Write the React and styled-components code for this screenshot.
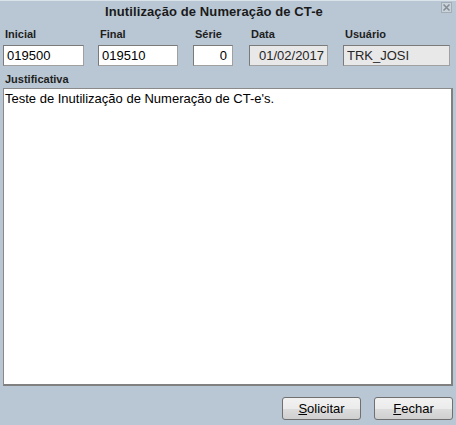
import React from 'react'
import styled, { createGlobalStyle } from 'styled-components'

const Global = createGlobalStyle`
    html, body {
        margin: 0;
        padding: 0;
        background: #b9c7d4;
    }
    body {
        font-family: "Liberation Sans", Arial, sans-serif;
    }
`

function App() {
    return (
        <Window>
            <Global />
            <TitleBar>
                <Title>Inutilização de Numeração de CT-e</Title>
                <CloseBtn aria-label="close">
                    <svg width="11" height="11" viewBox="0 0 11 11">
                        <rect x="0.5" y="0.5" width="10" height="10" fill="#c9d3dc" stroke="#a3acb4" />
                        <path d="M2.5 2.5 L8.5 8.5 M8.5 2.5 L2.5 8.5" stroke="#858c93" strokeWidth="1.6" />
                    </svg>
                </CloseBtn>
            </TitleBar>

            <FieldsRow>
                <Field width={81} offset={3}>
                    <Label>Inicial</Label>
                    <Input defaultValue="019500" />
                </Field>
                <Field width={80} offset={14}>
                    <Label>Final</Label>
                    <Input defaultValue="019510" />
                </Field>
                <Field width={40} offset={15}>
                    <Label>Série</Label>
                    <Input defaultValue="0" align="right" />
                </Field>
                <Field width={79} offset={16}>
                    <Label>Data</Label>
                    <Input defaultValue="01/02/2017" disabled indent={9} />
                </Field>
                <Field width={107} offset={15}>
                    <Label>Usuário</Label>
                    <Input defaultValue="TRK_JOSI" disabled />
                </Field>
            </FieldsRow>

            <JustLabel>Justificativa</JustLabel>
            <TextArea defaultValue="Teste de Inutilização de Numeração de CT-e's." />

            <ButtonRow>
                <Button><u>S</u>olicitar</Button>
                <Button><u>F</u>echar</Button>
            </ButtonRow>
        </Window>
    )
}

export default App

const Window = styled.div`
    width: 456px;
    height: 425px;
    box-sizing: border-box;
    background: #b9c7d4;
    border-top: 1px solid #dbe3ea;
    display: flex;
    flex-direction: column;
    overflow: hidden;
`

const TitleBar = styled.div`
    position: relative;
    height: 21px;
    display: flex;
    align-items: center;
    justify-content: center;
`

const Title = styled.h1`
    margin: 0 0 0 -28px;
    font-size: 13px;
    font-weight: bold;
    color: #1a1a1a;
    letter-spacing: 0.1px;
`

const CloseBtn = styled.div`
    position: absolute;
    right: 4px;
    top: 1px;
    line-height: 0;
`

const FieldsRow = styled.div`
    display: flex;
    margin-top: 5px;
`

const Field = styled.div`
    display: flex;
    flex-direction: column;
    flex: none;
    width: ${p => p.width}px;
    margin-left: ${p => p.offset}px;
`

const Label = styled.label`
    font-size: 11px;
    font-weight: bold;
    color: #1e1e1e;
    padding-left: 2px;
    height: 18px;
    line-height: 15px;
`

const Input = styled.input`
    box-sizing: border-box;
    width: 100%;
    height: 21px;
    border: 1px solid #7a7a7a;
    border-right-color: #a0a0a0;
    border-bottom-color: #a0a0a0;
    background: ${p => (p.disabled ? '#e8e8e8' : '#ffffff')};
    font-family: "Liberation Sans", Arial, sans-serif;
    font-size: 13px;
    color: ${p => (p.disabled ? '#262626' : '#000')};
    text-align: ${p => p.align || 'left'};
    padding: 0 ${p => (p.align === 'right' ? 5 : 2)}px 0 ${p => p.indent || 3}px;
    outline: none;
    -webkit-text-fill-color: ${p => (p.disabled ? '#262626' : '#000')};
    opacity: 1;
`

const JustLabel = styled(Label)`
    display: block;
    margin: 6px 0 0 3px;
    height: 16px;
`

const TextArea = styled.textarea`
    box-sizing: border-box;
    flex: none;
    width: 450px;
    height: 298px;
    margin: 0 0 0 3px;
    border: 1px solid #8a8a8a;
    border-right: 2px solid #808080;
    border-bottom: 2px solid #808080;
    background: #fff;
    font-family: "Liberation Sans", Arial, sans-serif;
    font-size: 13px;
    color: #000;
    padding: 2px 1px;
    resize: none;
    outline: none;
`

const ButtonRow = styled.div`
    display: flex;
    justify-content: flex-end;
    gap: 13px;
    padding: 11px 3px 0 0;
`

const Button = styled.button`
    box-sizing: border-box;
    width: 79px;
    height: 23px;
    border: 1px solid #707070;
    border-radius: 3px;
    background: linear-gradient(#f2f2f2 0%, #ebebeb 50%, #dddddd 51%, #cfcfcf 100%);
    font-family: "Liberation Sans", Arial, sans-serif;
    font-size: 13px;
    color: #000;
    padding: 0;
    cursor: pointer;
`
